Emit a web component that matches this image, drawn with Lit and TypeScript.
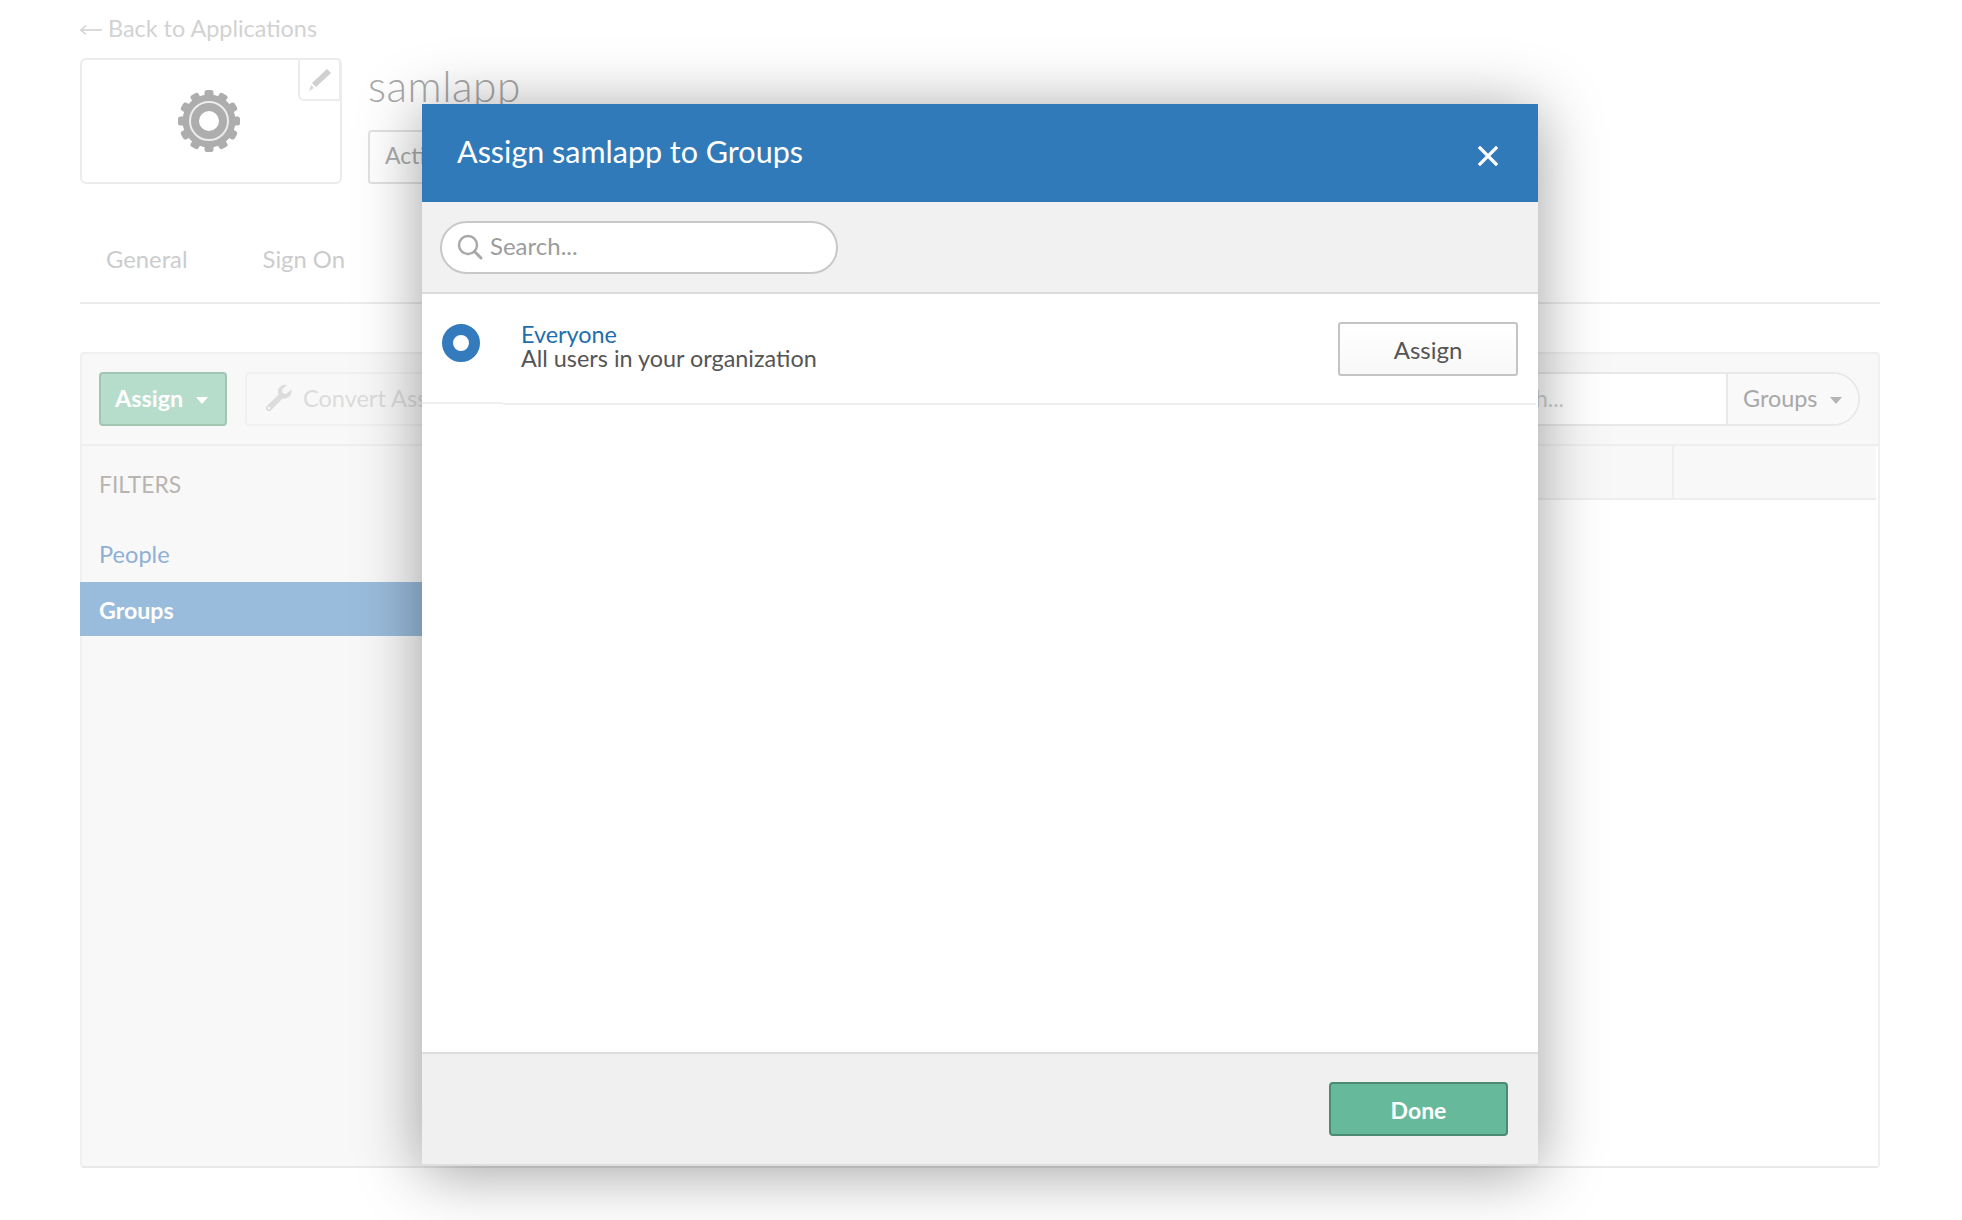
import { LitElement, html, css, svg } from 'lit';
import { customElement } from 'lit/decorators.js';

const gearTeeth = Array.from({ length: 12 }, (_, i) => i * 30);

const gear = html`<svg class="gear" viewBox="0 0 64 64" width="64" height="64">
  ${gearTeeth.map((a) => svg`<rect x="27.5" y="1" width="9" height="10" rx="2.5" fill="#adadad" transform="rotate(${a} 32 32)"></rect>`)}
  <circle cx="32" cy="32" r="26.5" fill="#adadad"></circle>
  <circle cx="32" cy="32" r="19" fill="none" stroke="#ececec" stroke-width="2"></circle>
  <circle cx="32" cy="32" r="10" fill="#fff"></circle>
</svg>`;

const pencil = html`<svg viewBox="0 0 24 24" width="24" height="24">
  <path d="M19 1 L23 5 L8 19 L4 15 Z" fill="#d0d0d0"></path>
  <path d="M3 17 L6 20 L1 23 Z" fill="#d8d8d8"></path>
</svg>`;

const wrench = html`<svg viewBox="0 0 28 28" width="28" height="28">
  <path d="M26.5 5.5 L21 10 L17.5 9 L17 5.5 L22 1 C18 0 13.5 2.5 13 7 C13 8.5 13.2 9.5 13.7 10.5 L1.8 22 C0.6 23.2 0.6 25 1.8 26.2 C3 27.4 4.8 27.4 6 26.2 L17.5 14.5 C22 15.5 27.5 12 26.5 5.5 Z" fill="#dcdcdc"></path>
  <circle cx="4" cy="24" r="1.3" fill="#f8f8f8"></circle>
</svg>`;

const search = html`<svg viewBox="0 0 26 26" width="26" height="26">
  <circle cx="11" cy="11" r="9" fill="none" stroke="#a8a8a8" stroke-width="2.4"></circle>
  <path d="M17.5 17.5 L24 24" stroke="#a8a8a8" stroke-width="3" stroke-linecap="round"></path>
</svg>`;

const closeIcon = html`<svg viewBox="0 0 20 20" width="20" height="20">
  <path d="M2 2 L18 18 M18 2 L2 18" stroke="#fff" stroke-width="3.2" stroke-linecap="square"></path>
</svg>`;

const backArrow = html`<svg viewBox="0 0 22 12" width="22" height="12">
  <path d="M1 6 H22" stroke="#d2d2d2" stroke-width="1.6"></path>
  <path d="M6 1.5 L0.8 6 L6 10.5" fill="none" stroke="#d2d2d2" stroke-width="1.6"></path>
</svg>`;

@customElement('app-root')
export class AppRoot extends LitElement {
    static styles = css`
      :host {
        display: block;
        position: relative;
        height: 1220px;
        overflow: hidden;
        background: #fff;
        font-family: Lato, "Liberation Sans", sans-serif;
      }

      .page {
        padding: 0 82px 0 80px;
        color: #ccc;
      }

      .back {
        height: 58px;
        padding-top: 14px;
        box-sizing: border-box;
        font-size: 23.4px;
        line-height: 28px;
        color: #d2d2d2;
        display: flex;
        align-items: flex-start;
        gap: 6px;
      }

      .back svg {
        margin-top: 10px;
      }

      .app-head {
        display: flex;
        gap: 26px;
        height: 126px;
      }

      .logo {
        position: relative;
        width: 262px;
        height: 126px;
        box-sizing: border-box;
        border: 2px solid #ececec;
        border-radius: 6px;
        display: flex;
        align-items: center;
        justify-content: center;
        padding-right: 4px;
      }

      .edit {
        position: absolute;
        top: -2px;
        right: -1px;
        width: 43px;
        height: 43px;
        box-sizing: border-box;
        border: 2px solid #ececec;
        border-radius: 0 4px 0 6px;
        display: flex;
        align-items: center;
        justify-content: center;
      }

      .app-name {
        font-size: 42.4px;
        font-weight: 300;
        line-height: 56px;
        color: #a8a8a8;
        letter-spacing: 0.5px;
      }

      .status {
        margin-top: 16px;
        width: 200px;
        height: 54px;
        box-sizing: border-box;
        border: 2px solid #e2e2e2;
        border-radius: 4px;
        padding-left: 15px;
        font-size: 23px;
        line-height: 46px;
        color: #aaa;
      }

      .tabs {
        display: flex;
        gap: 75px;
        height: 120px;
        box-sizing: border-box;
        padding: 59px 0 0 26px;
        border-bottom: 2px solid #ececec;
        font-size: 23.8px;
        line-height: 32px;
        color: #ccc;
      }

      .panel {
        margin-top: 48px;
        height: 816px;
        box-sizing: border-box;
        border: 2px solid #f0f0f0;
        border-bottom-color: #e8e8e8;
        border-radius: 4px;
        background: #f8f8f8;
        display: flex;
        flex-direction: column;
      }

      .toolbar {
        display: flex;
        align-items: center;
        height: 92px;
        flex: none;
        box-sizing: border-box;
        padding: 0 18px 0 17px;
        border-bottom: 2px solid #eeeeee;
      }

      .btn-assign {
        width: 128px;
        height: 54px;
        box-sizing: border-box;
        border: 2px solid #a1c6b4;
        border-radius: 4px;
        background: #b6dccb;
        color: #fff;
        font-size: 23.4px;
        font-weight: 700;
        display: flex;
        align-items: center;
        gap: 13px;
        padding: 0 0 2px 14px;
      }

      .caret {
        width: 0;
        height: 0;
        border-left: 6px solid transparent;
        border-right: 6px solid transparent;
        border-top: 7px solid #fff;
        margin-top: 4px;
      }

      .btn-convert {
        margin-left: 18px;
        width: 400px;
        height: 54px;
        box-sizing: border-box;
        border: 2px solid #f0f0f0;
        border-radius: 4px;
        display: flex;
        align-items: center;
        gap: 10px;
        padding: 0 0 2px 18px;
        font-size: 23.5px;
        color: #dcdcdc;
      }

      .search-group {
        margin-left: auto;
        display: flex;
        height: 54px;
        width: 500px;
        box-sizing: border-box;
        border: 2px solid #e8e8e8;
        border-radius: 4px 27px 27px 4px;
        background: #fff;
      }

      .search-group .field {
        flex: 1;
        box-sizing: border-box;
        padding-right: 162px;
        text-align: right;
        font-size: 23px;
        line-height: 48px;
        color: #cfcfcf;
      }

      .search-group .select {
        width: 132px;
        box-sizing: border-box;
        border-left: 2px solid #e8e8e8;
        background: #f9f9f9;
        border-radius: 0 25px 25px 0;
        display: flex;
        align-items: center;
        gap: 13px;
        padding: 0 0 2px 15px;
        font-size: 23.4px;
        color: #a8a8a8;
      }

      .search-group .caret {
        border-top-color: #b4b4b4;
      }

      .panel-body {
        flex: 1;
        display: flex;
      }

      .filters {
        width: 342px;
        margin-left: -2px;
        flex: none;
      }

      .filters-title {
        padding: 24px 0 0 19px;
        font-size: 22.8px;
        line-height: 28px;
        color: #b8b4b0;
      }

      .filter {
        height: 54px;
        padding-left: 19px;
        font-size: 23.6px;
        line-height: 52px;
        color: #8fb0d6;
      }

      .filter.people {
        margin-top: 30px;
      }

      .filter.active {
        background: #9abcdc;
        color: #fff;
        font-size: 23.2px;
        font-weight: 700;
        line-height: 56px;
      }

      .content {
        flex: 1;
        background: #fff;
      }

      .table-head {
        height: 54px;
        margin-right: 2px;
        box-sizing: border-box;
        background: #f8f8f8;
        border-bottom: 2px solid #eeeeee;
        display: flex;
        justify-content: flex-end;
      }

      .table-head div {
        width: 202px;
        border-left: 2px solid #eeeeee;
      }

      .modal {
        position: absolute;
        left: 422px;
        top: 104px;
        width: 1116px;
        height: 1062px;
        display: flex;
        flex-direction: column;
        background: #fff;
        box-shadow: 0 6px 60px rgba(0, 0, 0, 0.38);
      }

      .modal-head {
        flex: none;
        height: 98px;
        box-sizing: border-box;
        background: #317ab9;
        color: #fff;
        padding: 0 40px 5px 35px;
        display: flex;
        align-items: center;
        justify-content: space-between;
        font-size: 30.5px;
      }

      .modal-head svg {
        margin-top: 10px;
      }

      .modal-search {
        flex: none;
        height: 92px;
        box-sizing: border-box;
        background: #f1f1f1;
        border-bottom: 2px solid #dcdcdc;
        padding: 19px 0 0 18px;
      }

      .search-box {
        width: 398px;
        height: 53px;
        box-sizing: border-box;
        border: 2px solid #c8c8c8;
        border-radius: 27px;
        background: #fff;
        display: flex;
        align-items: center;
        gap: 7px;
        padding: 0 0 5px 15px;
        font-size: 24px;
        color: #9c9c9c;
      }

      .search-box svg {
        margin-top: 3px;
      }

      .modal-list {
        flex: 1;
      }

      .row {
        height: 108px;
        box-sizing: border-box;
        display: flex;
        align-items: flex-start;
        padding: 28px 20px 0 20px;
      }

      .radio {
        flex: none;
        margin-top: 2px;
        width: 38px;
        height: 38px;
        box-sizing: border-box;
        border: 11px solid #337bbd;
        border-radius: 50%;
        background: #fff;
      }

      .row-text {
        margin-left: 41px;
        flex: 1;
        font-size: 23.4px;
        line-height: 24px;
        color: #555;
      }

      .row-text .name {
        color: #1f6eb0;
      }

      .row-assign {
        width: 180px;
        height: 54px;
        box-sizing: border-box;
        border: 2px solid #c4c4c4;
        border-radius: 3px;
        background: linear-gradient(#fff, #f8f8f8);
        color: #555;
        font-size: 24px;
        line-height: 52px;
        text-align: center;
      }

      .rule {
        display: flex;
        height: 3px;
        padding-right: 2px;
      }

      .rule div {
        height: 2px;
        background: #efefef;
      }

      .rule .rule-left {
        width: 81px;
      }

      .rule .rule-right {
        flex: 1;
        margin-top: 1px;
      }

      .modal-foot {
        flex: none;
        height: 114px;
        box-sizing: border-box;
        background: #f0f0f0;
        border-top: 2px solid #dedede;
        border-bottom: 2px solid #dedede;
        display: flex;
        justify-content: flex-end;
        padding: 28px 30px 0 0;
      }

      .done {
        width: 179px;
        height: 54px;
        box-sizing: border-box;
        border: 2px solid #4c8a73;
        border-radius: 4px;
        background: #66b99a;
        color: #fff;
        font-size: 23px;
        font-weight: 700;
        line-height: 52px;
        text-align: center;
      }
    `;

    render() {
        return html`
      <div class="page">
        <div class="back">${backArrow}<span>Back to Applications</span></div>
        <div class="app-head">
          <div class="logo">
            ${gear}
            <div class="edit">${pencil}</div>
          </div>
          <div>
            <div class="app-name">samlapp</div>
            <div class="status">Active</div>
          </div>
        </div>
        <div class="tabs">
          <span>General</span>
          <span>Sign On</span>
        </div>
        <div class="panel">
          <div class="toolbar">
            <div class="btn-assign">Assign <span class="caret"></span></div>
            <div class="btn-convert">${wrench} Convert Assignments</div>
            <div class="search-group">
              <div class="field">Search...</div>
              <div class="select">Groups <span class="caret"></span></div>
            </div>
          </div>
          <div class="panel-body">
            <div class="filters">
              <div class="filters-title">FILTERS</div>
              <div class="filter people">People</div>
              <div class="filter active">Groups</div>
            </div>
            <div class="content">
              <div class="table-head"><div></div></div>
            </div>
          </div>
        </div>
      </div>

      <div class="modal">
        <div class="modal-head">
          <span>Assign samlapp to Groups</span>
          ${closeIcon}
        </div>
        <div class="modal-search">
          <div class="search-box">${search}<span>Search...</span></div>
        </div>
        <div class="modal-list">
          <div class="row">
            <div class="radio"></div>
            <div class="row-text">
              <div class="name">Everyone</div>
              <div>All users in your organization</div>
            </div>
            <div class="row-assign">Assign</div>
          </div>
          <div class="rule">
            <div class="rule-left"></div>
            <div class="rule-right"></div>
          </div>
        </div>
        <div class="modal-foot">
          <div class="done">Done</div>
        </div>
      </div>
    `;
    }
}
